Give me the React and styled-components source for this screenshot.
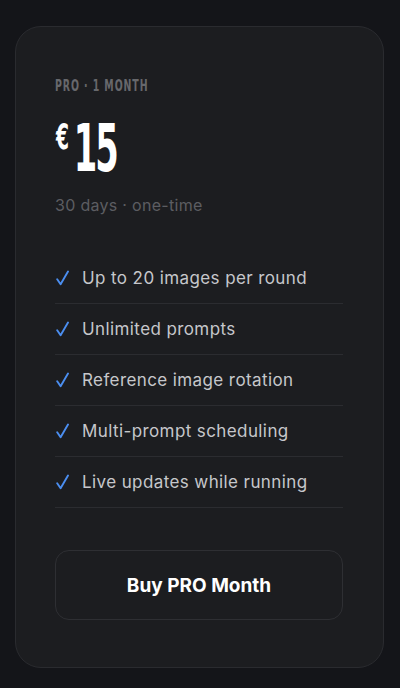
import React from 'react';
import styled, { createGlobalStyle } from 'styled-components';

const features = [
  'Up to 20 images per round',
  'Unlimited prompts',
  'Reference image rotation',
  'Multi-prompt scheduling',
  'Live updates while running',
];

function CheckIcon() {
  return (
    <CheckSvg viewBox="0 0 13 16">
      <path d="M1.2 9.2 L4.6 14.2 L12 1.6" />
    </CheckSvg>
  );
}

function App() {
  return (
    <Page>
      <GlobalStyle />
      <Card>
        <PlanLabel>
          <Squeeze $scale={0.57}>PRO · 1 MONTH</Squeeze>
        </PlanLabel>
        <PriceRow>
          <Squeeze $scale={0.52}>
            <Currency>€</Currency>
            <Amount>15</Amount>
          </Squeeze>
        </PriceRow>
        <Period>30 days · one-time</Period>
        <FeatureList>
          {features.map((f) => (
            <FeatureRow key={f}>
              <CheckIcon />
              <FeatureText>{f}</FeatureText>
            </FeatureRow>
          ))}
        </FeatureList>
        <BuyButton>Buy PRO Month</BuyButton>
      </Card>
    </Page>
  );
}

const GlobalStyle = createGlobalStyle`
  html, body {
    margin: 0;
    padding: 0;
    background: #141519;
  }
  body {
    font-family: Inter, "Noto Sans", sans-serif;
  }
`;

const Page = styled.div`
  min-height: 688px;
  box-sizing: border-box;
  padding: 26px 16px 20px 15px;
  background: #141519;
`;

const Card = styled.div`
  box-sizing: border-box;
  background: #1c1d20;
  border: 1px solid #2a2b2f;
  border-radius: 26px;
  padding: 49px 40px 47px 39px;
  display: flex;
  flex-direction: column;
`;

const Squeeze = styled.span`
  display: inline-block;
  transform: scaleX(${(p) => p.$scale});
  transform-origin: left center;
  white-space: nowrap;
`;

const PlanLabel = styled.div`
  height: 20px;
  line-height: 20px;
  font-family: "DejaVu Sans", sans-serif;
  font-weight: 700;
  font-size: 16.5px;
  letter-spacing: 1.6px;
  color: #67686c;
`;

const PriceRow = styled.div`
  margin-top: 23px;
  height: 60px;
  line-height: 60px;
  font-family: "DejaVu Sans", sans-serif;
  font-weight: 700;
  color: #ffffff;
`;

const Currency = styled.span`
  font-size: 36px;
  vertical-align: top;
  position: relative;
  top: -12px;
  margin-left: 2px;
  margin-right: 9px;
`;

const Amount = styled.span`
  font-size: 65px;
  letter-spacing: -4px;
`;

const Period = styled.div`
  margin-top: 15px;
  height: 22px;
  line-height: 22px;
  font-size: 16px;
  letter-spacing: 0.3px;
  color: #5c5d62;
`;

const FeatureList = styled.div`
  margin-top: 37px;
  display: flex;
  flex-direction: column;
`;

const FeatureRow = styled.div`
  height: 50px;
  display: flex;
  align-items: center;
  gap: 13px;
  border-bottom: 1px solid #2b2c30;
`;

const CheckSvg = styled.svg`
  width: 13px;
  height: 16px;
  flex-shrink: 0;
  margin-left: 1px;
  fill: none;
  stroke: #4b8ef0;
  stroke-width: 1.9;
  stroke-linecap: round;
  stroke-linejoin: round;
`;

const FeatureText = styled.span`
  font-size: 17px;
  letter-spacing: 0.4px;
  color: #c6c7cb;
`;

const BuyButton = styled.button`
  margin-top: 42px;
  height: 70px;
  width: 100%;
  background: transparent;
  border: 1px solid #2e2f33;
  border-radius: 14px;
  font-family: Inter, "Noto Sans", sans-serif;
  font-weight: 700;
  font-size: 19px;
  color: #ffffff;
  cursor: pointer;
`;

export default App;
